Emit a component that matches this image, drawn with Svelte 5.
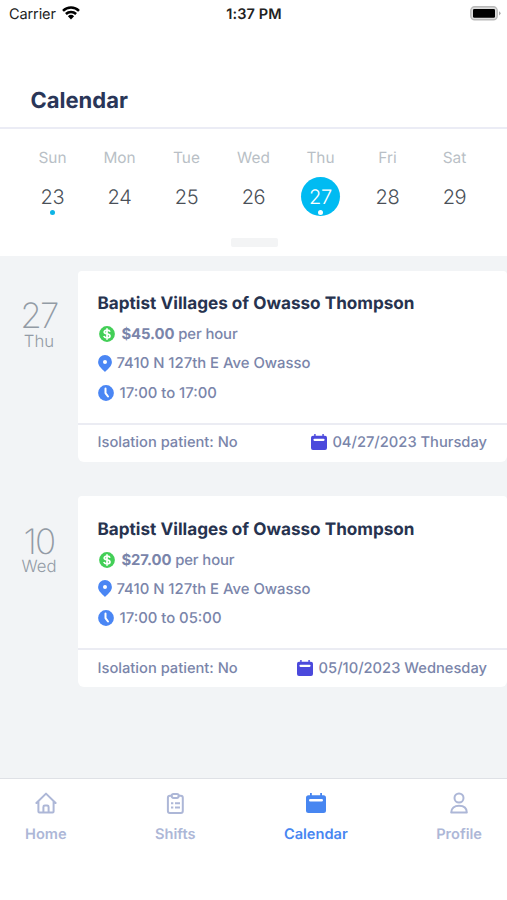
<script>
  const week = [
    { name: 'Sun', date: 23, marked: true },
    { name: 'Mon', date: 24 },
    { name: 'Tue', date: 25 },
    { name: 'Wed', date: 26 },
    { name: 'Thu', date: 27, marked: true, selected: true },
    { name: 'Fri', date: 28 },
    { name: 'Sat', date: 29 }
  ];
  const shifts = [
    { date: 27, day: 'Thu', rate: '$45.00', hours: '17:00 to 17:00', full: '04/27/2023 Thursday' },
    { date: 10, day: 'Wed', rate: '$27.00', hours: '17:00 to 05:00', full: '05/10/2023 Wednesday' }
  ];
</script>

{#snippet calendarIcon(size)}
  <svg width={size} height={size} viewBox="0 0 20 20">
    <path fill="currentColor" fill-rule="evenodd" d="M4 0h1.800V2.200h8.400V0H16V2.200h1.500A2.500 2.500 0 0 1 20 4.700V17.500A2.500 2.500 0 0 1 17.500 20h-15A2.500 2.500 0 0 1 0 17.500V4.700A2.500 2.500 0 0 1 2.500 2.200H4zM4.300 6a1 1 0 0 0 0 2.600h11.400a1 1 0 0 0 0-2.600z" />
  </svg>
{/snippet}

<div class="screen">
  <div class="status">
    <div class="carrier">
      <span>Carrier</span>
      <svg width="18" height="14" viewBox="0 0 18 14">
        <g fill="none" stroke="#000" stroke-width="2.500">
          <path d="M1 4.900a11.400 11.400 0 0 1 16 0" />
          <path d="M3.900 8a7.300 7.300 0 0 1 10.200 0" />
        </g>
        <path d="M5.900 10.200a4.500 4.500 0 0 1 6.200 0L9 13.500z" />
      </svg>
    </div>
    <div class="time">1:37 PM</div>
    <svg class="battery" width="31" height="15" viewBox="0 0 31 15">
      <rect x=".8" y=".8" width="26.400" height="13" rx="3.800" fill="#ddd" stroke="#b9b9b9" stroke-width="1.400" />
      <rect x="3" y="3" width="22" height="8.700" rx="1.300" />
      <path d="M29 5.200q3.200 2.100 0 4.200z" fill="#aaa" />
    </svg>
  </div>

  <header><h1>Calendar</h1></header>

  <section class="week">
    <div class="days">
      {#each week as d}
        <div class="day">
          <span class="name">{d.name}</span>
          <div class="date" class:selected={d.selected}>
            <span>{d.date}</span>
            <i class:marked={d.marked}></i>
          </div>
        </div>
      {/each}
    </div>
    <div class="knob"></div>
  </section>

  <main>
    {#each shifts as s}
      <div class="entry">
        <div class="side">
          <div class="num">{s.date}</div>
          <div class="wd">{s.day}</div>
        </div>
        <article>
          <div class="body">
            <h2>Baptist Villages of Owasso Thompson</h2>
            <div class="line rate">
              <svg width="16" height="16" viewBox="0 0 16 16">
                <circle cx="8" cy="8" r="7.900" fill="#43cf57" />
                <path d="M11 5.700C10.600 4.600 9.500 4.200 8 4.200c-1.700 0-2.800.6-2.800 1.800C5.200 8.700 11 7.200 11 10c0 1.200-1.200 1.900-3 1.900-1.700 0-2.800-.6-3.200-1.800M8 2.300v11.400" fill="none" stroke="#fff" stroke-width="1.700" />
              </svg>
              <span><b>{s.rate}</b> per hour</span>
            </div>
            <div class="line place">
              <svg width="14" height="17" viewBox="0 0 14 17">
                <path fill="#4a86f4" fill-rule="evenodd" d="M7 .1a6.900 6.900 0 0 1 6.900 6.900c0 4.100-3.800 6.900-6.900 9.900C3.900 13.900.1 11.100.1 7A6.900 6.900 0 0 1 7 .1zM7 4.900a2 2 0 1 0 0 4 2 2 0 0 0 0-4z" />
              </svg>
              <span>7410 N 127th E Ave Owasso</span>
            </div>
            <div class="line hours">
              <svg width="16" height="16" viewBox="0 0 16 16">
                <circle cx="8" cy="8" r="7.900" fill="#4a86f4" />
                <path d="M7.500 3.600v4.500l2.500 3.400" fill="none" stroke="#fff" stroke-width="2" stroke-linecap="round" stroke-linejoin="round" />
              </svg>
              <span>{s.hours}</span>
            </div>
          </div>
          <div class="foot">
            <span class="iso">Isolation patient: No</span>
            <div class="full">{@render calendarIcon(16)}<span>{s.full}</span></div>
          </div>
        </article>
      </div>
    {/each}
  </main>

  <nav>
    <div class="tab home">
      <svg width="22" height="22" viewBox="0 0 22 22" fill="none" stroke="currentColor" stroke-width="2" stroke-linejoin="round" stroke-linecap="round">
        <path d="M1.400 11 11 1.600 20.600 11M3.400 9.500v10.100q0 1 1 1h13.200q1 0 1-1V9.500M8.400 20.400V15q0-1.400 1.400-1.400h2.400q1.400 0 1.400 1.400v5.400" />
      </svg>
      <span>Home</span>
    </div>
    <div class="tab shifts">
      <svg width="22" height="22" viewBox="0 0 22 22" fill="none" stroke="currentColor" stroke-width="2" stroke-linejoin="round">
        <path d="M7.500 3.800H5.900q-2 0-2 2v13.200q0 2 2 2h10.900q2 0 2-2V5.800q0-2-2-2h-2.300" />
        <rect x="7.700" y="1.900" width="7" height="4" rx="1.800" />
        <path d="M7 11.200h2.300M11 11.200h5M7 15.500h2.300M11 15.500h5" />
      </svg>
      <span>Shifts</span>
    </div>
    <div class="tab calendar active">
      {@render calendarIcon(20)}
      <span>Calendar</span>
    </div>
    <div class="tab profile">
      <svg width="22" height="22" viewBox="0 0 22 22" fill="none" stroke="currentColor" stroke-width="2" stroke-linejoin="round">
        <circle cx="11" cy="6" r="4.500" />
        <path d="M3.200 20.500c0-4.500 3.300-6.800 7.800-6.800s7.800 2.300 7.800 6.800z" />
      </svg>
      <span>Profile</span>
    </div>
  </nav>
</div>

<style>
  :global(body) { margin: 0; background: #fff; }
  .screen {
    width: 507px; height: 900px; overflow: hidden; background: #fff;
    display: flex; flex-direction: column; text-rendering: geometricPrecision;
    font-family: Inter, "Liberation Sans", sans-serif; color: #7a85aa;
  }
  svg { display: block; flex: none; }
  .status { height: 28px; display: grid; grid-template-columns: 1fr auto 1fr; align-items: start; color: #222; padding: 0 6px 0 9px; }
  .carrier { display: flex; gap: 6px; font-size: 14.500px; line-height: 29px; letter-spacing: -0.1px; }
  .carrier svg { margin-top: 6px; }
  .time { font-size: 14.500px; line-height: 29px; font-weight: 600; letter-spacing: 0.1px; margin-left: -2px; }
  .battery { justify-self: end; margin-top: 6px; }
  header { height: 101px; box-sizing: border-box; padding: 59px 0 0 30.500px; border-bottom: 2px solid #ebecf5; }
  h1 { margin: 0; font-size: 22px; line-height: 28px; font-weight: 700; color: #2a3658; }
  .week { height: 127px; display: flex; flex-direction: column; align-items: center; }
  .days { width: 469px; display: flex; margin-top: 19px; }
  .day { flex: 1; display: flex; flex-direction: column; align-items: center; }
  .name { font-size: 15.400px; line-height: 20px; color: #b9bfc6; }
  .date { width: 39px; height: 39px; margin-top: 9px; border-radius: 50%; display: flex; flex-direction: column; align-items: center; color: #4a5058; font-size: 20px; letter-spacing: -0.300px; }
  .date span { line-height: 24px; margin-top: 8px; font-weight: 350; }
  .date i { width: 5px; height: 5px; border-radius: 50%; margin-top: 1px; }
  .date i.marked { background: #0eb4e6; }
  .selected { background: #00bbf2; color: #fff; }
  .date.selected i { background: #fff; }
  .knob { width: 47px; height: 9px; border-radius: 2px; background: #f3f4f5; margin: 22px 0 0 1px; }
  main { flex: none; height: 522px; box-sizing: border-box; background: #f2f4f6; padding-top: 15px; }
  .entry { display: flex; height: 191px; margin-bottom: 34.400px; }
  .side { width: 78px; text-align: center; color: #929ba5; padding-top: 27.200px; }
  .num { font-size: 35px; line-height: 36px; font-weight: 200; letter-spacing: -1.700px; }
  .wd { font-size: 16.700px; line-height: 18px; margin-top: -1.500px; font-weight: 300; }
  article { flex: 1; background: #fff; border-radius: 4px 4px 6px 6px; display: flex; flex-direction: column; }
  .body { height: 154px; box-sizing: border-box; border-bottom: 2px solid #ebecf3; padding: 21.300px 0 0 19.500px; }
  h2 { margin: 0; font-size: 17.150px; line-height: 24px; font-weight: 700; color: #27334f; white-space: nowrap; }
  .line { display: flex; align-items: center; height: 29.300px; font-size: 14.850px; font-weight: 450; white-space: nowrap; }
  .rate { padding-left: 1px; gap: 7px; margin-top: 3.200px; letter-spacing: -0.1px; }
  .rate b { font-weight: 700; }
  .place { gap: 5px; }
  .hours { gap: 6px; }
  .foot { flex: 1; display: flex; justify-content: space-between; align-items: center; padding: 0 20px 2.400px 19.500px; font-size: 14.700px; font-weight: 450; }
  .full { display: flex; gap: 5.500px; align-items: center; color: #4b49dc; }
  .full span { color: #7a85aa; }
  nav { height: 122px; box-sizing: border-box; border-top: 1px solid #dfe1e6; display: flex; justify-content: space-between; padding: 13px 25px 0; color: #adb7d7; }
  .tab { display: flex; flex-direction: column; align-items: center; font-size: 14.600px; font-weight: 600; }
  .tab span { line-height: 20px; margin-top: 10px; }
  .calendar svg { margin: 1px 0; }
  .active { color: #4786f1; }
</style>
